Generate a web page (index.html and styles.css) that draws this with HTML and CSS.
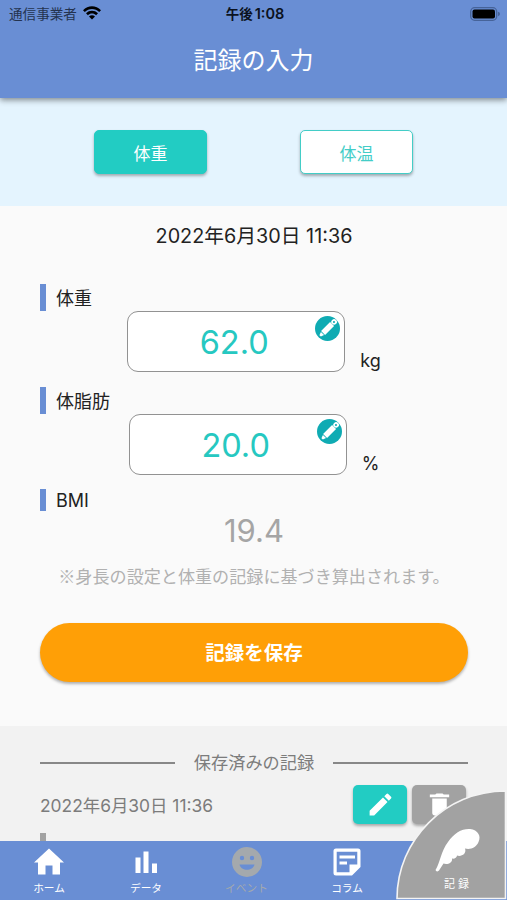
FILE: index.html
```html
<!DOCTYPE html>
<html lang="ja">
<head>
<meta charset="utf-8">
<title>記録の入力</title>
<link rel="stylesheet" href="styles.css">
</head>
<body>
<div class="app">
  <header class="header">
    <div class="status">
      <div class="carrier"><span>通信事業者</span>
        <svg class="wifi" viewBox="0 0 18 14"><path d="M0 4.2C5-1 13-1 18 4.2L16.2 6.1C12.2 2.1 5.8 2.1 1.8 6.1Z"/><path d="M3 7.3C6.3 4 11.7 4 15 7.3L13.1 9.2C10.8 7 7.2 7 4.9 9.2Z"/><path d="M6 10.4C7.7 8.8 10.3 8.8 12 10.4L9 13.4Z"/></svg>
      </div>
      <div class="clock">午後<span class="clock-time">1:08</span></div>
      <svg class="battery" viewBox="0 0 31 14"><rect x=".7" y=".7" width="26" height="12.6" rx="4" fill="none" stroke="#466399" stroke-width="1.3"/><rect x="2.500" y="2.400" width="22.500" height="9.200" rx="2"/><path d="M28 4.8Q30 5.4 30 7T28 9.2Z" fill="#466399"/></svg>
    </div>
    <h1 class="title">記録の入力</h1>
  </header>
  <div class="tabs">
    <button class="tab tab-active">体重</button>
    <button class="tab">体温</button>
  </div>
  <main class="form">
    <div class="date">2022年6月30日 11:36</div>
    <section class="field">
      <h2 class="label">体重</h2>
      <div class="entry">
        <div class="box">62.0
          <svg class="badge" viewBox="0 0 24 24"><circle cx="12" cy="12" r="12" fill="#0fabb3"/><g transform="rotate(45 12 12)" fill="#fff"><path d="M9.300 5.800H14.700V18H9.300ZM9.900 18.800H14.100L13 22H11Z"/><circle cx="12" cy="3" r="2.700"/></g><circle cx="18.200" cy="5.800" r="1" fill="#0fabb3"/></svg>
        </div>
        <span class="unit">kg</span>
      </div>
    </section>
    <section class="field">
      <h2 class="label">体脂肪</h2>
      <div class="entry">
        <div class="box">20.0
          <svg class="badge" viewBox="0 0 24 24"><circle cx="12" cy="12" r="12" fill="#0fabb3"/><g transform="rotate(45 12 12)" fill="#fff"><path d="M9.300 5.800H14.700V18H9.300ZM9.900 18.800H14.100L13 22H11Z"/><circle cx="12" cy="3" r="2.700"/></g><circle cx="18.200" cy="5.800" r="1" fill="#0fabb3"/></svg>
        </div>
        <span class="unit">%</span>
      </div>
    </section>
    <section class="bmi">
      <h2 class="label label-short">BMI</h2>
      <div class="bmi-value">19.4</div>
      <p class="note">※身長の設定と体重の記録に基づき算出されます。</p>
    </section>
    <button class="save">記録を保存</button>
  </main>
  <section class="history">
    <div class="divider"><span>保存済みの記録</span></div>
    <div class="record">
      <span class="record-date">2022年6月30日 11:36</span>
      <button class="action action-edit"><svg viewBox="0 0 24 24"><path d="M3 17.25V21h3.75L17.81 9.94l-3.75-3.75L3 17.25zM20.71 7.04a1 1 0 0 0 0-1.41l-2.34-2.34a1 1 0 0 0-1.41 0l-1.83 1.83 3.75 3.75 1.83-1.83z"/></svg></button>
      <button class="action"><svg viewBox="0 0 24 24"><path d="M6 19c0 1.1.9 2 2 2h8c1.1 0 2-.9 2-2V7H6v12zM20 3.800h-4.500l-1-1h-5l-1 1H4v2.200h16z"/></svg></button>
    </div>
    <div class="record-mark"></div>
  </section>
  <nav class="nav">
    <a class="item"><svg viewBox="0 0 36 32" class="home"><path d="M18 2.500L33 16.500H29V28.500H21.500V19.500H14.500V28.500H7V16.500H3Z"/></svg><span>ホーム</span></a>
    <a class="item"><svg viewBox="0 0 32 32"><path d="M5.500 11.500h5v15.500h-5zM13.500 5.500h5v21.500h-5zM22 17.500h5v9.500h-5z"/></svg><span>データ</span></a>
    <a class="item item-off"><svg viewBox="0 0 32 32"><path fill-rule="evenodd" d="M16 1a15 15 0 1 0 0 30a15 15 0 0 0 0-30M11 9.800a2.200 2.200 0 1 1 0 4.400a2.200 2.200 0 0 1 0-4.400M21 9.800a2.200 2.200 0 1 1 0 4.400a2.200 2.200 0 0 1 0-4.400M8.500 18.500h15C22 25.500 10 25.500 8.500 18.500Z"/></svg><span>イベント</span></a>
    <a class="item"><svg viewBox="0 0 32 32"><path fill-rule="evenodd" d="M5 2.500H27Q29.500 2.500 29.500 5V21L21 29.500H5Q2.500 29.500 2.500 27V5Q2.500 2.500 5 2.500M5.700 5.700V26.300H18.500V18.500H26.300V5.700Z"/><path d="M8.500 9.500H24V12.500H8.500ZM8.500 15.500H16V18.500H8.500Z"/></svg><span>コラム</span></a>
    <a class="item"></a>
  </nav>
  <a class="fab">
    <svg class="sector" viewBox="0 0 111 110"><path d="M1 108.500C1 50 49 1 109.500 1V108.500Z" fill="#a2a2a2" stroke="#f4f4f4" stroke-width="1.600"/><path fill="#fff" d="M39.500 80C44 73 45 61 52 52C58 43 66 38.500 74 39C82 40 85.500 46 82.500 52C80 58 74 60 69 58.500C71 64 65 67 61 65.500C61 68 58 69 56 68.500C57 73 51 75 47.500 73.500L43 80.500Q40.500 82.500 39.500 80Z"/></svg>
    <span class="fab-label">記 録</span>
  </a>
</div>
</body>
</html>
```
FILE: styles.css
```css
* { box-sizing: border-box; margin: 0; padding: 0; }
body { width: 507px; height: 900px; overflow: hidden; font-family: Inter, "Noto Sans CJK JP", sans-serif; color: #222; }
button { border: 0; font-family: inherit; white-space: nowrap; }
.app { position: relative; display: flex; flex-direction: column; width: 507px; height: 900px; background: #fafafa; }

.header { position: relative; z-index: 1; height: 98px; background: #698ed4; box-shadow: 0 2px 6px rgba(0, 0, 0, .45); }
.status { display: grid; grid-template-columns: 1fr auto 1fr; align-items: center; height: 27px; padding: 0 6px 0 9px; color: #0b1220; }
.carrier { display: flex; align-items: center; gap: 6px; font-size: 13.600px; line-height: 20px; color: #24334f; }
.wifi { width: 18px; height: 14px; margin-top: -1px; fill: #000; }
.clock { font-size: 13.500px; font-weight: 700; line-height: 20px; white-space: nowrap; }
.clock-time { margin-left: 2px; font-size: 14.500px; font-weight: 600; }
.battery { justify-self: end; width: 31px; height: 14px; }
.title { height: 68px; color: #fff; font-size: 24px; font-weight: 400; line-height: 68px; text-align: center; }

.tabs { display: flex; gap: 93px; height: 108px; padding: 32px 0 0 94px; background: #e4f4fe; }
.tab { width: 113px; height: 44px; border: 1.500px solid #43cdc7; border-radius: 5px; background: #fff; color: #43cdc7; font-size: 17px; box-shadow: 0 2px 3px rgba(0, 0, 0, .3); }
.tab-active { border-color: #22ccc3; background: #22ccc3; color: #fff; }

.form { height: 520px; padding: 15px 39px 0 40px; }
.date { height: 63px; font-size: 19.800px; line-height: 31px; text-align: center; white-space: nowrap; }
.field { height: 102.500px; }
.label { height: 27px; padding-left: 10px; border-left: 6px solid #698ed4; font-size: 18px; font-weight: 400; line-height: 30px; }
.label-short { height: 22px; line-height: 24px; }
.entry { display: flex; justify-content: center; align-items: flex-end; gap: 15px; height: 61px; }
.box { position: relative; width: 218px; height: 61px; border: 1.500px solid #929292; border-radius: 11px; background: #fff; color: #26c8c1; font-size: 32.500px; line-height: 62px; text-align: center; padding-right: 4px; }
.badge { position: absolute; top: 4px; right: 4px; width: 25px; height: 25px; }
.unit { font-size: 18px; line-height: 22px; }
.bmi { height: 134px; }
.bmi-value { height: 38px; color: #a5a5a5; font-size: 31px; line-height: 40px; text-align: center; }
.note { margin: 14px -10px 0; color: #b1b1b1; font-family: "Noto Sans CJK JP", sans-serif; font-size: 17.100px; line-height: 26px; text-align: center; white-space: nowrap; }
.save { display: block; width: 428px; height: 59px; padding-bottom: 3px; border-radius: 30px; background: #ff9f06; color: #fff; font-size: 19.500px; font-weight: 700; box-shadow: 0 2px 3px rgba(0, 0, 0, .3); }

.history { height: 115px; padding: 24px 39px 0 40px; background: #f2f2f2; color: #7c7c7c; }
.divider { display: flex; align-items: center; gap: 19px; height: 26px; font-size: 17.200px; line-height: 26px; }
.divider::before, .divider::after { content: ""; flex: 1; height: 1.500px; background: #888; }
.record { display: flex; align-items: center; gap: 5px; height: 39px; margin: 9px 2px 0 0; }
.record-date { flex: 1; font-size: 17.400px; white-space: nowrap; }
.action { display: grid; place-items: center; width: 54px; height: 39px; border-radius: 5px; background: #a2a2a2; box-shadow: 0 2px 3px rgba(0, 0, 0, .3); }
.action-edit { background: #22ccc3; }
.action svg { width: 29px; height: 29px; fill: #fff; }
.record-mark { width: 6px; height: 8px; margin-top: 9px; background: #a2a2a2; }

.nav { display: grid; grid-template-columns: 98px 96px 105px 96px 1fr; height: 59px; background: #698ed4; }
.item { display: flex; flex-direction: column; align-items: center; padding-top: 5px; color: #fff; font-size: 10.700px; line-height: 16px; white-space: nowrap; }
.item svg { width: 32px; height: 32px; margin-bottom: 3px; fill: currentColor; }
.item .home { width: 36px; }
.item-off { color: #a4a9ad; }
.fab { position: absolute; right: 0; bottom: 0; width: 111px; height: 110px; color: #fff; }
.sector { display: block; width: 111px; height: 110px; }
.fab-label { position: absolute; top: 86px; left: 48px; font-size: 11px; line-height: 16px; white-space: nowrap; }
```
